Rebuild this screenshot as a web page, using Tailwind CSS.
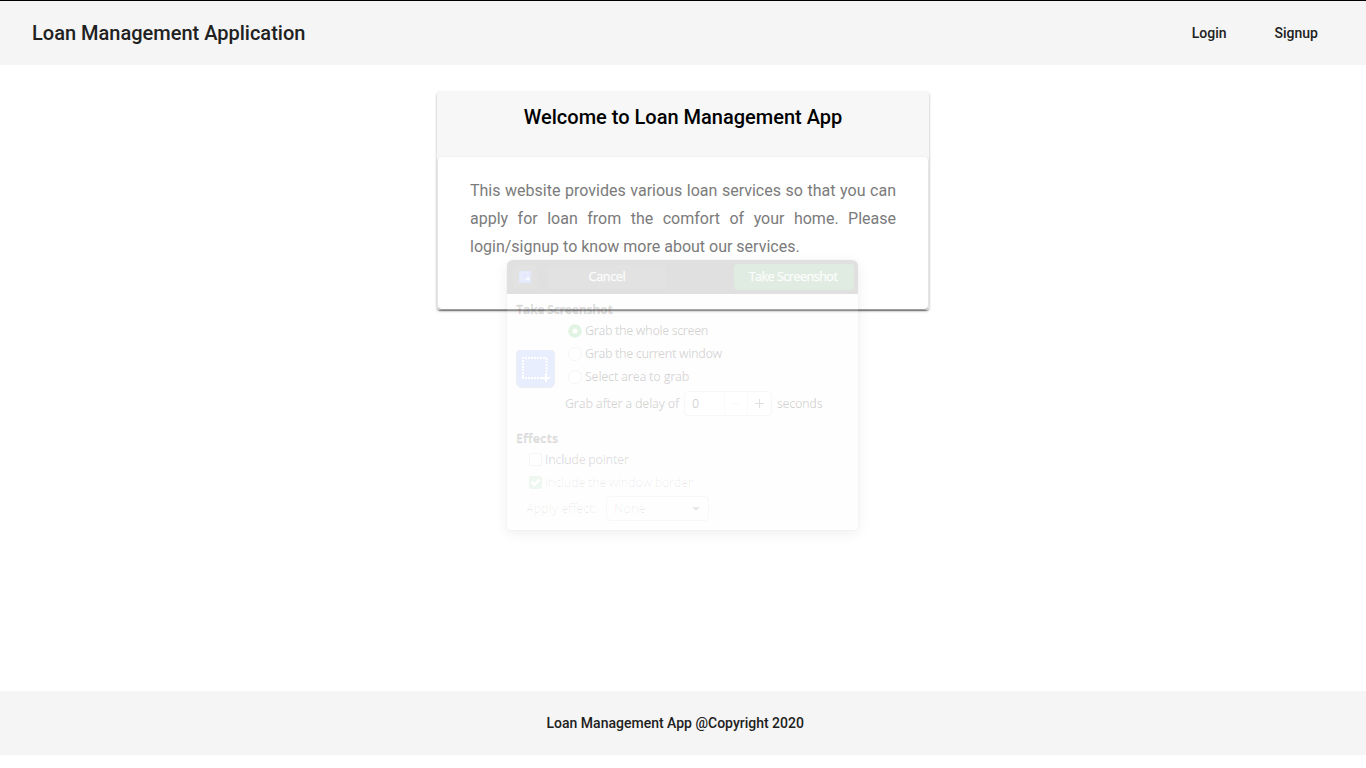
<!DOCTYPE html>
<html lang="en">
<head>
<meta charset="utf-8">
<title>Loan Management Application</title>
<script src="https://cdn.jsdelivr.net/npm/@tailwindcss/browser@4"></script>
</head>
<body class="relative flex h-screen flex-col overflow-hidden bg-white font-['Roboto',sans-serif]">
<header class="flex h-[65px] shrink-0 items-center justify-between border-t border-black bg-[#f5f5f5] pr-12 pl-8 text-[#212121]">
  <h1 class="text-xl font-medium">Loan Management Application</h1>
  <nav class="flex gap-12 text-sm font-medium"><a>Login</a><a>Signup</a></nav>
</header>
<main class="flex flex-1 items-start justify-center pt-[27px]">
  <section class="flex h-[218px] w-[492px] flex-col rounded-[3px] bg-[#f7f7f7] px-px pb-px shadow-[0_2px_1px_-1px_rgba(0,0,0,0.24),0_1px_1px_rgba(0,0,0,0.14),0_1px_3px_rgba(0,0,0,0.28)]">
    <h2 class="h-[65px] pt-[11px] text-center text-xl font-medium text-black">Welcome to Loan Management App</h2>
    <div class="flex-1 rounded-[4px] bg-white px-8 pt-[20px] shadow-[0_2px_1px_-1px_rgba(0,0,0,0.2),0_1px_1px_rgba(0,0,0,0.14),0_1px_3px_rgba(0,0,0,0.16)]">
      <p class="text-justify text-base leading-7 text-[#7b7b7b]">This website provides various loan services so that you can apply for loan from the comfort of your home. Please login/signup to know more about our services.</p>
    </div>
  </section>
</main>
<footer class="mb-[13px] flex h-16 shrink-0 items-center justify-center bg-[#f5f5f5] pr-[15.5px] text-sm font-medium text-[#212121]">Loan Management App @Copyright 2020</footer>

<div class="absolute top-[260px] left-[507px] flex h-[270px] w-[351px] flex-col rounded-t-[6px] rounded-b-[2px] font-['Open_Sans',sans-serif] text-[12.5px] leading-[18px] font-medium whitespace-nowrap text-black/12 shadow-[0_3px_14px_rgba(0,0,0,0.07),0_0_1px_rgba(0,0,0,0.12)]">
  <div class="flex h-[34px] items-center rounded-t-[6px] bg-[#e0e0e0] pr-[4px] pl-[6px] text-white/85 [-webkit-text-stroke:0.25px]">
    <div class="flex h-[24px] w-[24px] items-center justify-center rounded bg-white/5">
      <svg class="h-3 w-3" viewBox="0 0 12 12"><rect width="12" height="12" rx="1" fill="#e4eafb"/><path d="M2 8V2h7v4M2 8h5" fill="none" stroke="#fff" stroke-opacity=".6" stroke-dasharray="1 1"/><path d="M9 6v4M7 8h4" stroke="#fff"/></svg>
    </div>
    <div class="ml-[11px] flex h-[24px] w-[118px] items-center justify-center rounded bg-white/5 tracking-[-0.3px]">Cancel</div>
    <div class="ml-auto flex h-[26px] w-[120px] items-center justify-center rounded bg-[#e0ebe2]"><span class="mr-[2px] tracking-[-0.48px]">Take Screenshot</span></div>
  </div>
  <div class="flex flex-1 flex-col rounded-b-[2px] bg-[#f4f4f4]/12 [-webkit-text-stroke:0.35px]">
    <div class="h-[25px] pt-[7px] pl-[9px] font-bold"><span class="tracking-[-0.42px]">Take Screenshot</span></div>
    <div class="flex h-[103px] pl-[9px]">
      <svg class="mt-[31px] h-[40px] w-[40px]" viewBox="0 0 40 40"><rect x=".5" y="-.5" width="38" height="38" rx="5" fill="#e8eefd" stroke="#eceef3"/><path d="M7 27V8h24M30.500 8v16M6 28h20" fill="none" stroke="#fff" stroke-width="2" stroke-dasharray="2 1"/><path d="M30 24v8M26 28h8" stroke="#fff" stroke-width="2"/></svg>
      <div class="flex flex-col pl-[9px]">
        <div class="flex h-[23px] items-center gap-[3px] pl-[3px]"><svg class="h-[14px] w-[14px]" viewBox="0 0 14 14"><circle cx="7" cy="7" r="4.700" fill="none" stroke="#e1f3e3" stroke-width="4.200"/></svg><span class="tracking-[-0.4px]">Grab the whole screen</span></div>
        <div class="flex h-[23px] items-center gap-[3px] pl-[3px]"><svg class="h-[14px] w-[14px]" viewBox="0 0 14 14"><circle cx="7" cy="7" r="6.500" fill="#fff" stroke="#f4f4f4"/></svg><span class="tracking-[-0.4px]">Grab the current window</span></div>
        <div class="flex h-[24px] items-center gap-[3px] pl-[3px]"><svg class="h-[14px] w-[14px]" viewBox="0 0 14 14"><circle cx="7" cy="7" r="6.500" fill="#fff" stroke="#f4f4f4"/></svg><span class="tracking-[-0.24px]">Select area to grab</span></div>
        <div class="flex h-[30px] items-center"><span class="w-[119px] tracking-[-0.25px]">Grab after a delay of</span>
          <div class="mt-[-1px] flex h-[25px] w-[88px] items-center rounded-[4px] border border-[#f7f7f7] bg-white">
            <span class="w-[39px] pl-[7px] text-black/15">0</span><span class="flex h-full w-6 items-center justify-center border-l border-[#fafafa]"><span class="h-px w-[9px] bg-[#f9f9f9]"></span></span>
            <span class="flex h-full w-[24px] items-center justify-center border-l border-[#fafafa]"><svg class="h-[9px] w-[9px]" viewBox="0 0 9 9"><path d="M4.500 0v9M0 4.500h9" stroke="#dfdfdf"/></svg></span>
          </div><span class="ml-[5px] tracking-[-0.36px]">seconds</span>
        </div>
      </div>
    </div>
    <div class="h-[26px] pt-[8px] pl-[9px] font-bold">Effects</div>
    <div class="flex h-[23px] items-center gap-[4px] pl-[22px]"><span class="h-[13px] w-[13px] rounded-[2px] border border-[#f5f5f5] bg-white"></span><span class="ml-[-1px] tracking-[-0.33px] text-black/10">Include pointer</span></div>
    <div class="flex h-[23px] items-center gap-[4px] pl-[22px]"><svg class="h-[13px] w-[13px]" viewBox="0 0 13 13"><rect width="13" height="13" rx="2" fill="#eff8f0"/><path d="M2.500 6l3 3 5-5.500" fill="none" stroke="#fff" stroke-width="2.500"/></svg><span class="ml-[-1px] tracking-[-0.38px] text-black/6">Include the window border</span></div>
    <div class="flex h-[30px] items-center pl-[19px] text-black/6"><span class="w-[80px] tracking-[-0.12px]">Apply effect:</span><div class="mt-[-1px] flex h-[25px] w-[103px] items-center justify-between rounded-[4px] border border-[#f7f7f7] pr-2 pl-[7px]"><span>None</span><svg class="h-[4px] w-[8px]" viewBox="0 0 8 4"><path d="M0 0h8L4 4z" fill="#e9e9e9"/></svg></div></div>
  </div>
</div>
</body>
</html>
